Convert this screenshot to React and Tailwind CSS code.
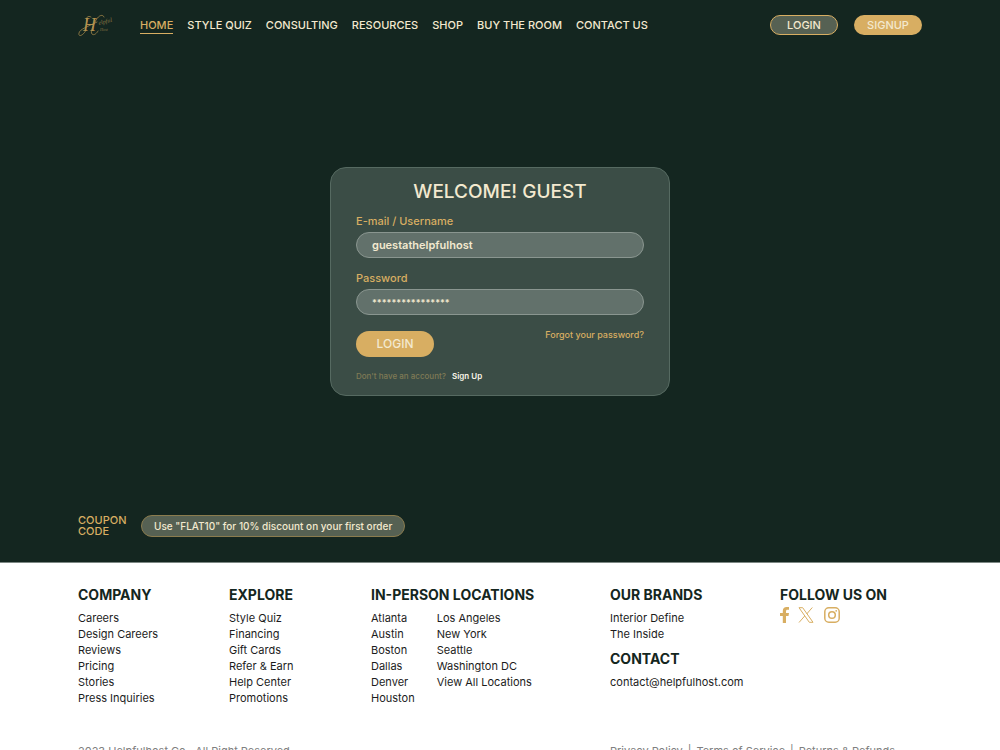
import React from "react"

const navItems = ["Home", "Style Quiz", "Consulting", "Resources", "Shop", "Buy the Room", "Contact Us"]

const company = ["Careers", "Design Careers", "Reviews", "Pricing", "Stories", "Press Inquiries"]
const explore = ["Style Quiz", "Financing", "Gift Cards", "Refer & Earn", "Help Center", "Promotions"]
const locations = ["Atlanta", "Austin", "Boston", "Dallas", "Denver", "Houston"]
const moreLocations = ["Los Angeles", "New York", "Seattle", "Washington DC", "View All Locations"]
const brands = ["Interior Define", "The Inside"]
const legal = ["Privacy Policy", "Terms of Service", "Returns & Refunds"]

function Logo() {
  return (
    <svg width="36" height="24" viewBox="0 0 36 24" fill="none" stroke="#b3924f" strokeLinecap="round" role="img" aria-label="Helpful Host">
      <text x="5" y="18" fontFamily="Liberation Serif, serif" fontStyle="italic" fontSize="18" fill="#b3924f" stroke="none">H</text>
      <path strokeWidth="0.7" d="M13 4C10 2 7 5 9 8M8 17C6 22 0 25 1 20C2 16 9 14 19 9M26 4C25 1 21 2 18 7C15 13 12 19 14 21C16 23 19 20 20 18" />
      <text x="21" y="12" fontFamily="Liberation Serif, serif" fontStyle="italic" fontSize="6" fill="#8d7845" stroke="none" transform="rotate(-14 21 12)">elpful</text>
      <text x="22" y="18" fontFamily="Liberation Serif, serif" fontStyle="italic" fontSize="4" fill="#8d7845" stroke="none">Host</text>
    </svg>
  )
}

function Header() {
  return (
    <header className="flex items-center justify-between px-[78px] pt-[13px]">
      <div className="flex items-center gap-[26px]">
        <a href="#"><Logo /></a>
        <nav className="flex gap-[14px] text-[11px] font-medium leading-4 uppercase whitespace-nowrap">
          {navItems.map((item, i) => (
            <a
              key={item}
              href="#"
              className={i === 0 ? "border-b border-[#d8ae62] text-[#d8ae62]" : "border-b border-transparent"}
            >
              {item}
            </a>
          ))}
        </nav>
      </div>
      <div className="flex gap-4 text-[11px] font-medium">
        <button className="h-5 w-[68px] rounded-full border border-[#d8ae62] bg-[#566153]">LOGIN</button>
        <button className="h-5 w-[68px] rounded-full bg-[#d8ae62]">SIGNUP</button>
      </div>
    </header>
  )
}

function LoginCard() {
  return (
    <form className="mx-auto w-[340px] rounded-2xl border border-[#566a61] bg-[#3b4d46] px-[25px] pt-3 pb-[13px]">
      <h1 className="text-center text-[19px] font-medium leading-6">WELCOME! GUEST</h1>
      <label htmlFor="username" className="mt-[9px] block text-[11px] font-medium leading-4 text-[#d8ae62]">E-mail / Username</label>
      <input
        id="username"
        type="text"
        defaultValue="guestathelpfulhost"
        className="mt-[3px] block h-[26px] w-full rounded-full border border-[#8a9690] bg-[#62716b] px-[15px] text-[11px] font-semibold outline-none"
      />
      <label htmlFor="password" className="mt-3 block text-[11px] font-medium leading-4 text-[#d8ae62]">Password</label>
      <input
        id="password"
        type="password"
        placeholder="****************"
        className="mt-[3px] block h-[26px] w-full rounded-full border border-[#8a9690] bg-[#62716b] px-[15px] text-[9px] font-semibold outline-none placeholder:text-[#f3e9cf]"
      />
      <div className="mt-4 flex items-start justify-between">
        <button type="button" className="h-[26px] w-[78px] rounded-full bg-[#d8ae62] text-xs font-medium">LOGIN</button>
        <a href="#" className="text-[9px] font-medium leading-[7px] text-[#d8ae62]">Forgot your password?</a>
      </div>
      <p className="mt-[13px] text-[8px] font-medium leading-3 text-[#7f7a55]">
        Don't have an account? <a href="#" className="ml-1 font-semibold text-[#f9f5e8]">Sign Up</a>
      </p>
    </form>
  )
}

function LinkList({ items, className = "" }) {
  return (
    <ul className={"text-[11px] leading-4 text-[#1c1c1c] " + className}>
      {items.map((item) => (
        <li key={item}><a href="#">{item}</a></li>
      ))}
    </ul>
  )
}

function Heading({ children }) {
  return <h2 className="text-sm font-bold leading-4 text-[#142620]">{children}</h2>
}

function SocialLinks() {
  return (
    <div className="mt-1 flex items-center gap-2 text-[#d8ae62]">
      <a href="#" aria-label="Facebook">
        <svg width="10" height="16" viewBox="0 0 10 16" fill="currentColor">
          <path d="M2.8 16V9H0V6h2.8V4C2.8 1.4 4.3 0 6.6 0H9v2.7H7.5C6.4 2.7 6 3.3 6 4.2V6h3l-.5 3H6v7z" />
        </svg>
      </a>
      <a href="#" aria-label="X">
        <svg width="16" height="16" viewBox="0 0 16 16" fill="none" stroke="currentColor">
          <path d="M1 .7h3.7l10.3 14.6h-3.7zM14.3.5L8.700 7M6.7 9L1 15.5" />
        </svg>
      </a>
      <a href="#" aria-label="Instagram" className="ml-0.5">
        <svg width="16" height="16" viewBox="0 0 16 16" fill="none" stroke="currentColor" strokeWidth="1.5">
          <rect x=".8" y=".8" width="14.4" height="14.4" rx="4" />
          <circle cx="8" cy="8" r="3.3" />
          <circle cx="12.2" cy="3.8" r=".9" fill="currentColor" stroke="none" />
        </svg>
      </a>
    </div>
  )
}

function Footer() {
  return (
    <footer className="border-t border-[#7d8884] px-[78px] pt-6 pb-10">
      <div className="grid grid-cols-[151fr_142fr_239fr_170fr_142fr] whitespace-nowrap">
        <div className="min-w-0">
          <Heading>COMPANY</Heading>
          <LinkList items={company} className="mt-[7px]" />
        </div>
        <div className="min-w-0">
          <Heading>EXPLORE</Heading>
          <LinkList items={explore} className="mt-[7px]" />
        </div>
        <div className="min-w-0">
          <Heading>IN-PERSON LOCATIONS</Heading>
          <div className="mt-[7px] flex gap-[22px]">
            <LinkList items={locations} />
            <LinkList items={moreLocations} />
          </div>
        </div>
        <div className="min-w-0">
          <Heading>OUR BRANDS</Heading>
          <LinkList items={brands} className="mt-[7px]" />
          <div className="mt-[9px]">
            <Heading>CONTACT</Heading>
          </div>
          <LinkList items={["contact@helpfulhost.com"]} className="mt-[7px]" />
        </div>
        <div className="min-w-0">
          <Heading>FOLLOW US ON</Heading>
          <SocialLinks />
        </div>
      </div>
      <div className="mt-[37px] grid grid-cols-[532fr_312fr] text-[11px] leading-4 text-[#808080] whitespace-nowrap">
        <p>2023 Helpfulhost Co.. All Right Reserved</p>
        <ul className="flex">
          {legal.map((item, i) => (
            <li key={item}>
              {i > 0 && <span className="mx-[5px]">|</span>}
              <a href="#">{item}</a>
            </li>
          ))}
        </ul>
      </div>
    </footer>
  )
}

function App() {
  return (
    <div className="bg-white font-['Inter',sans-serif]">
      <div className="bg-[#142620] pb-[25px] text-[#f3e9cf]">
        <Header />
        <main className="pt-[130px]">
          <LoginCard />
          <div className="mt-[119px] flex items-center gap-[15px] px-[78px]">
            <p className="w-12 text-[11px] font-medium leading-[11px] text-[#d8ae62]">COUPON CODE</p>
            <p className="rounded-full border border-[#8b7c4e] bg-[#566153] px-3 text-[10px] font-medium leading-5">
              Use "FLAT10" for 10% discount on your first order
            </p>
          </div>
        </main>
      </div>
      <Footer />
    </div>
  )
}

export default App
